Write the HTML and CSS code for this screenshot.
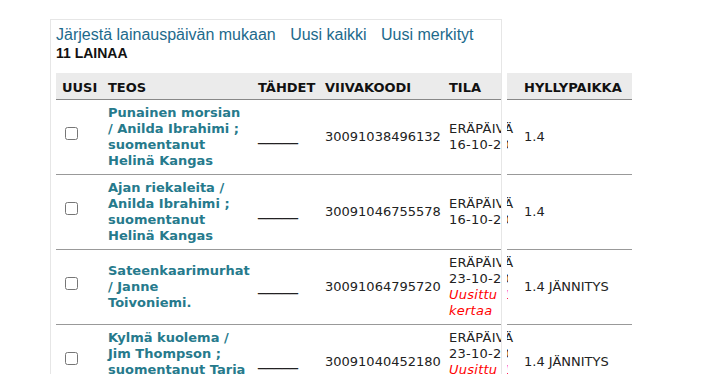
FILE: index.html
```html
<!DOCTYPE html>
<html lang="fi">
<head>
    <meta charset="UTF-8">
    <title>Lainat</title>
    <link rel="stylesheet" href="styles.css">
</head>
<body>
    <div class="panel">
        <div class="sort-links">
            <a href="#">Järjestä lainauspäivän mukaan</a>
            <a href="#">Uusi kaikki</a>
            <a href="#">Uusi merkityt</a>
        </div>
        <div class="count">11 LAINAA</div>

        <table class="loans">
            <colgroup>
                <col class="c-new">
                <col class="c-title">
                <col class="c-stars">
                <col class="c-code">
                <col class="c-status">
                <col class="c-shelf">
            </colgroup>
            <thead>
                <tr>
                    <th>Uusi</th>
                    <th>Teos</th>
                    <th>Tähdet</th>
                    <th>Viivakoodi</th>
                    <th>Tila</th>
                    <th>Hyllypaikka</th>
                </tr>
            </thead>
            <tbody>
                <tr>
                    <td><input type="checkbox"></td>
                    <td class="title"><a href="#">Punainen morsian / Anilda Ibrahimi ; suomentanut Helinä Kangas</a></td>
                    <td><span class="stars">_____</span></td>
                    <td>30091038496132</td>
                    <td class="status">
                        <span class="line">ERÄPÄIVÄ</span>
                        <span class="line clip">16-10-2023</span>
                    </td>
                    <td>1.4</td>
                </tr>
                <tr>
                    <td><input type="checkbox"></td>
                    <td class="title"><a href="#">Ajan riekaleita / Anilda Ibrahimi ; suomentanut Helinä Kangas</a></td>
                    <td><span class="stars">_____</span></td>
                    <td>30091046755578</td>
                    <td class="status">
                        <span class="line">ERÄPÄIVÄ</span>
                        <span class="line clip">16-10-2023</span>
                    </td>
                    <td>1.4</td>
                </tr>
                <tr>
                    <td><input type="checkbox"></td>
                    <td class="title"><a href="#">Sateenkaarimurhat / Janne Toivoniemi.</a></td>
                    <td><span class="stars">_____</span></td>
                    <td>30091064795720</td>
                    <td class="status">
                        <span class="line">ERÄPÄIVÄ</span>
                        <span class="line clip">23-10-2023</span>
                        <span class="line clip renewed">Uusittu 1</span>
                        <span class="line renewed">kertaa</span>
                    </td>
                    <td>1.4 JÄNNITYS</td>
                </tr>
                <tr>
                    <td><input type="checkbox"></td>
                    <td class="title"><a href="#">Kylmä kuolema / Jim Thompson ; suomentanut Tarja Lipponen</a></td>
                    <td><span class="stars">_____</span></td>
                    <td>30091040452180</td>
                    <td class="status">
                        <span class="line">ERÄPÄIVÄ</span>
                        <span class="line clip">23-10-2023</span>
                        <span class="line clip renewed">Uusittu 1</span>
                        <span class="line renewed">kertaa</span>
                    </td>
                    <td>1.4 JÄNNITYS</td>
                </tr>
            </tbody>
        </table>
    </div>
</body>
</html>
```

FILE: styles.css
```css
body {
    margin: 0;
    background: #fff;
    color: #222;
    font-family: 'Liberation Sans', Arial, sans-serif;
}

.panel {
    position: relative;
    width: 452px;
    box-sizing: border-box;
    margin: 19px 0 0 50px;
    padding: 5px 5px 0;
    border: 1px solid #e6e6e6;
}

/* white gap that cuts the table at the panel edge */
.panel::after {
    content: "";
    position: absolute;
    top: -1px;
    bottom: -1px;
    left: 100%;
    width: 5px;
    background: #fff;
    border-left: 1px solid #e6e6e6;
    z-index: 1;
}

.sort-links {
    font-size: 16px;
    line-height: 20px;
}

.sort-links a {
    color: #1d6a8c;
    text-decoration: none;
    margin-right: 10px;
}

.count {
    font-size: 14px;
    font-weight: bold;
    line-height: 16px;
    color: #111;
    margin-bottom: 12px;
}

.loans {
    border-collapse: collapse;
    table-layout: fixed;
    width: 576px;
    font-family: 'DejaVu Sans', Verdana, sans-serif;
    font-size: 13px;
    line-height: 16px;
}

.c-new { width: 46px; }
.c-title { width: 150px; }
.c-stars { width: 67px; }
.c-code { width: 124px; }
.c-status { width: 75px; }
.c-shelf { width: 114px; }

.loans th {
    background: #ebebeb;
    text-align: left;
    text-transform: uppercase;
    font-weight: bold;
    color: #111;
    padding: 7px 6px 3px;
    border-bottom: 1px solid #888;
}

.loans td {
    padding: 5px 6px;
    vertical-align: middle;
    border-bottom: 1px solid #999;
    color: #222;
}

.loans input[type="checkbox"] {
    margin: 0 0 8px 3px;
    vertical-align: middle;
}

.title a {
    color: #267a8c;
    font-weight: bold;
    text-decoration: none;
}

.stars {
    font-size: 16px;
    line-height: 16px;
    vertical-align: 3px;
}

.status .line {
    display: block;
    white-space: nowrap;
    letter-spacing: 0.25px;
}

.status .clip {
    width: 59px;
    overflow: hidden;
}

.renewed {
    color: #f00;
    font-style: italic;
}
```
